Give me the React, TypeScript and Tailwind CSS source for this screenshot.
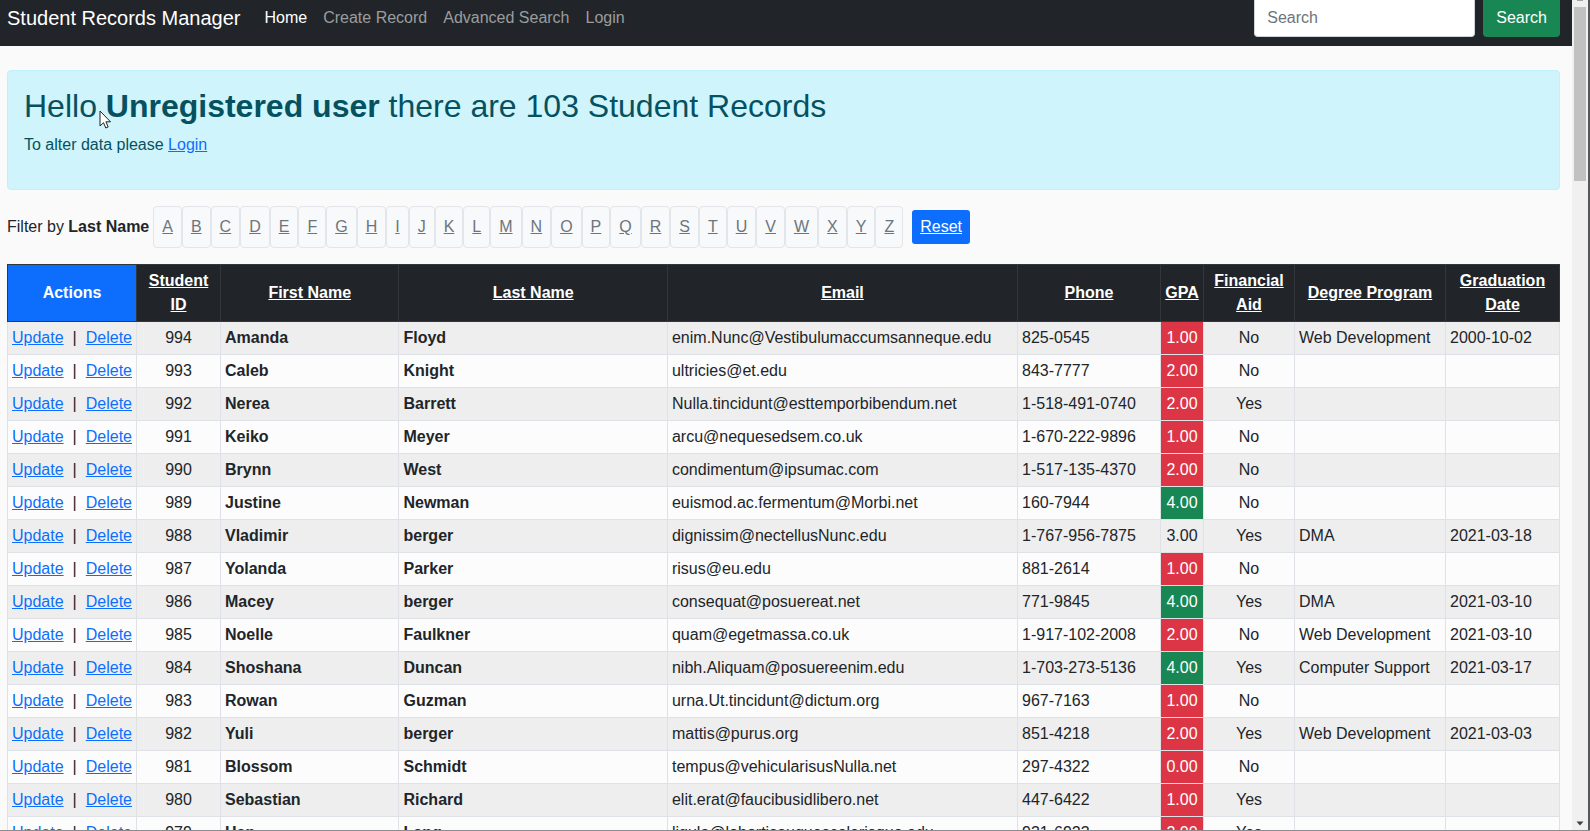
import React from "react";

type Student = {
  id: number;
  first: string;
  last: string;
  email: string;
  phone: string;
  gpa: string;
  aid: "Yes" | "No";
  program: string;
  graduation: string;
};

const students: Student[] = [
  { id: 994, first: "Amanda", last: "Floyd", email: "enim.Nunc@Vestibulumaccumsanneque.edu", phone: "825-0545", gpa: "1.00", aid: "No", program: "Web Development", graduation: "2000-10-02" },
  { id: 993, first: "Caleb", last: "Knight", email: "ultricies@et.edu", phone: "843-7777", gpa: "2.00", aid: "No", program: "", graduation: "" },
  { id: 992, first: "Nerea", last: "Barrett", email: "Nulla.tincidunt@esttemporbibendum.net", phone: "1-518-491-0740", gpa: "2.00", aid: "Yes", program: "", graduation: "" },
  { id: 991, first: "Keiko", last: "Meyer", email: "arcu@nequesedsem.co.uk", phone: "1-670-222-9896", gpa: "1.00", aid: "No", program: "", graduation: "" },
  { id: 990, first: "Brynn", last: "West", email: "condimentum@ipsumac.com", phone: "1-517-135-4370", gpa: "2.00", aid: "No", program: "", graduation: "" },
  { id: 989, first: "Justine", last: "Newman", email: "euismod.ac.fermentum@Morbi.net", phone: "160-7944", gpa: "4.00", aid: "No", program: "", graduation: "" },
  { id: 988, first: "Vladimir", last: "berger", email: "dignissim@nectellusNunc.edu", phone: "1-767-956-7875", gpa: "3.00", aid: "Yes", program: "DMA", graduation: "2021-03-18" },
  { id: 987, first: "Yolanda", last: "Parker", email: "risus@eu.edu", phone: "881-2614", gpa: "1.00", aid: "No", program: "", graduation: "" },
  { id: 986, first: "Macey", last: "berger", email: "consequat@posuereat.net", phone: "771-9845", gpa: "4.00", aid: "Yes", program: "DMA", graduation: "2021-03-10" },
  { id: 985, first: "Noelle", last: "Faulkner", email: "quam@egetmassa.co.uk", phone: "1-917-102-2008", gpa: "2.00", aid: "No", program: "Web Development", graduation: "2021-03-10" },
  { id: 984, first: "Shoshana", last: "Duncan", email: "nibh.Aliquam@posuereenim.edu", phone: "1-703-273-5136", gpa: "4.00", aid: "Yes", program: "Computer Support", graduation: "2021-03-17" },
  { id: 983, first: "Rowan", last: "Guzman", email: "urna.Ut.tincidunt@dictum.org", phone: "967-7163", gpa: "1.00", aid: "No", program: "", graduation: "" },
  { id: 982, first: "Yuli", last: "berger", email: "mattis@purus.org", phone: "851-4218", gpa: "2.00", aid: "Yes", program: "Web Development", graduation: "2021-03-03" },
  { id: 981, first: "Blossom", last: "Schmidt", email: "tempus@vehicularisusNulla.net", phone: "297-4322", gpa: "0.00", aid: "No", program: "", graduation: "" },
  { id: 980, first: "Sebastian", last: "Richard", email: "elit.erat@faucibusidlibero.net", phone: "447-6422", gpa: "1.00", aid: "Yes", program: "", graduation: "" },
  { id: 979, first: "Han", last: "Lang", email: "ligula@lobortisauguescelerisque.edu", phone: "931-6923", gpa: "2.00", aid: "Yes", program: "", graduation: "" },
];

const navLinks = ["Home", "Create Record", "Advanced Search", "Login"];
const letters = "ABCDEFGHIJKLMNOPQRSTUVWXYZ".split("");
const headings = ["Student ID", "First Name", "Last Name", "Email", "Phone", "GPA", "Financial Aid", "Degree Program", "Graduation Date"];

function gpaClass(gpa: string) {
  const value = Number(gpa);
  if (value >= 4) return "bg-[#198754] text-white";
  if (value <= 2) return "bg-[#dc3545] text-white";
  return "";
}

function NavBar() {
  return (
    <header className="flex items-start justify-between bg-[#212529] pr-3 pb-[9px] pl-[7px]">
      <nav className="flex h-[37px] items-center pb-[2px]">
        <a href="#" className="mr-6 text-xl leading-6 text-white">Student Records Manager</a>
        <ul className="flex gap-4">
          {navLinks.map((label, i) => (
            <li key={label}>
              <a href="#" className={i === 0 ? "text-white" : "text-[#9b9d9e]"}>{label}</a>
            </li>
          ))}
        </ul>
      </nav>
      <form className="flex gap-2" onSubmit={(e) => e.preventDefault()}>
        <input
          type="search"
          placeholder="Search"
          aria-label="Search"
          className="h-[37px] w-[221px] rounded-b border border-t-0 border-[#ced4da] bg-white px-3 pb-px text-[#212529] placeholder:text-[#6c757d]"
        />
        <button type="submit" className="h-[37px] rounded-b bg-[#198754] px-[13px] pb-[2px] text-white">Search</button>
      </form>
    </header>
  );
}

function Welcome() {
  return (
    <section className="mt-6 rounded border border-[#c0f0f9] bg-[#cff4fc] px-4 pt-4 pb-8 text-[#055160]">
      <h1 className="mb-2 text-[32px] leading-[38px]">
        Hello <strong className="font-bold">Unregistered user</strong> there are 103 Student Records
      </h1>
      <p>
        To alter data please <a href="#" className="text-[#0d6efd] underline">Login</a>
      </p>
    </section>
  );
}

function LetterFilter() {
  return (
    <div className="mt-4 flex items-center">
      <span className="mr-1">
        Filter by <strong className="font-bold">Last Name</strong>
      </span>
      <ul className="flex">
        {letters.map((letter) => (
          <li key={letter} className="rounded border border-[#e2e5e9] bg-[#f8f9fa] p-2">
            <a href="#" className="text-[#6c757d] underline">{letter}</a>
          </li>
        ))}
      </ul>
      <a href="#" className="ml-[9px] rounded-[3px] bg-[#0d6efd] px-2 py-[5px] text-white underline">Reset</a>
    </div>
  );
}

function RecordsTable() {
  const cell = "border border-[#dee2e6] p-1";
  return (
    <table className="mt-4 w-full table-fixed border-collapse">
      <colgroup>
        <col className="w-[129px]" />
        <col className="w-[84px]" />
        <col className="w-[11.5%]" />
        <col className="w-[17.3%]" />
        <col />
        <col className="w-[143px]" />
        <col className="w-[43px]" />
        <col className="w-[91px]" />
        <col className="w-[151px]" />
        <col className="w-[114px]" />
      </colgroup>
      <thead>
        <tr className="bg-[#212529] text-white">
          <th scope="col" className="border border-[#32373b] bg-[#0d6efd] p-1 font-bold">Actions</th>
          {headings.map((heading) => (
            <th key={heading} scope="col" className="border border-[#32373b] p-1 font-bold">
              <a href="#" className="underline">{heading}</a>
            </th>
          ))}
        </tr>
      </thead>
      <tbody>
        {students.map((s) => (
          <tr key={s.id} className="odd:bg-[#eeeeee] even:bg-[#fcfcfc]">
            <td className={cell}>
              <div className="flex justify-between whitespace-nowrap">
                <a href="#" className="text-[#0d6efd] underline">Update</a>
                <span>|</span>
                <a href="#" className="text-[#0d6efd] underline">Delete</a>
              </div>
            </td>
            <td className={`${cell} text-center`}>{s.id}</td>
            <td className={`${cell} font-bold`}>{s.first}</td>
            <td className={`${cell} font-bold`}>{s.last}</td>
            <td className={cell}>{s.email}</td>
            <td className={cell}>{s.phone}</td>
            <td className={`${cell} text-center ${gpaClass(s.gpa)}`}>{s.gpa}</td>
            <td className={`${cell} text-center`}>{s.aid}</td>
            <td className={cell}>{s.program}</td>
            <td className={cell}>{s.graduation}</td>
          </tr>
        ))}
      </tbody>
    </table>
  );
}

function ScrollRail() {
  return (
    <div aria-hidden="true" className="flex w-[18px] shrink-0 flex-col items-center justify-between border-r-2 border-[#55585a] bg-[#f0f0f0] pb-1">
      <div className="flex flex-col items-center gap-[6px]">
        <div className="h-px w-[6px] bg-[#a3a3a3]" />
        <div className="h-[174px] w-3 bg-[#c1c1c1]" />
      </div>
      <svg viewBox="0 0 8 5" className="h-[5px] w-2">
        <path d="M0.5 0.5h7L4 4.5z" fill="#404040" />
      </svg>
    </div>
  );
}

export default function App() {
  return (
    <div className="relative flex h-screen overflow-hidden border-b border-[#8a8c8e] bg-[#fafafa] font-['Liberation_Sans',Arial,sans-serif] text-base text-[#212529]">
      <div className="min-w-0 flex-1">
        <NavBar />
        <main className="pr-3 pl-[7px]">
          <Welcome />
          <LetterFilter />
          <RecordsTable />
        </main>
      </div>
      <ScrollRail />
      <svg aria-hidden="true" viewBox="0 0 12 19" className="absolute top-[110px] left-[99px] h-[19px] w-3">
        <path d="M1 1v15l3.5-3.3 2.3 5.3 2.4-1-2.3-5.2h4.6z" fill="#fff" stroke="#222" strokeWidth="1" />
      </svg>
    </div>
  );
}
